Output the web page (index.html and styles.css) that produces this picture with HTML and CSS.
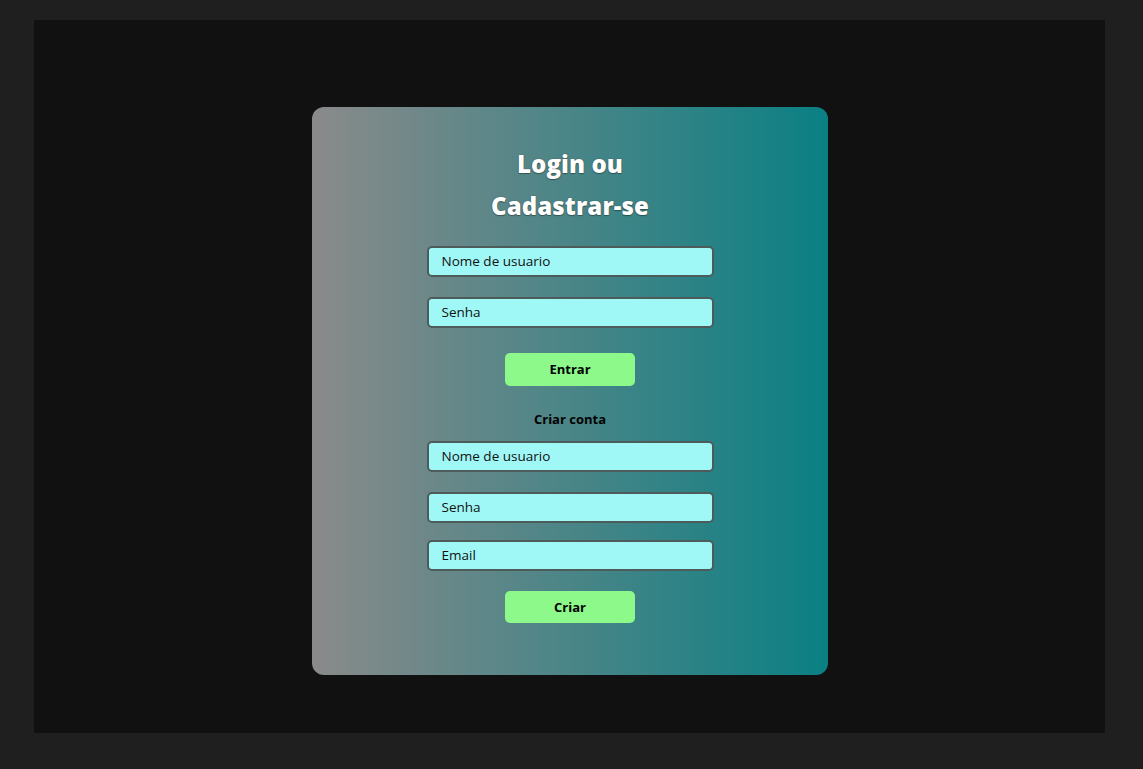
FILE: index.html
```html
<!DOCTYPE html>
<html lang="pt">
<head>
<meta charset="utf-8">
<title>Login ou Cadastrar-se</title>
<link rel="stylesheet" href="styles.css">
</head>
<body>
<div class="panel">
  <div class="card">
    <h1 class="title">Login ou<br>Cadastrar-se</h1>
    <div class="field f-first">Nome de usuario</div>
    <div class="field f-gap20">Senha</div>
    <div class="btn b-login">Entrar</div>
    <div class="subtitle">Criar conta</div>
    <div class="field f-gap13">Nome de usuario</div>
    <div class="field f-gap20">Senha</div>
    <div class="field f-gap17">Email</div>
    <div class="btn b-create">Criar</div>
  </div>
</div>
</body>
</html>
```
FILE: styles.css
```css
html, body {
  margin: 0;
  padding: 0;
}
body {
  background: #1f1f1f;
  width: 1143px;
  height: 769px;
  overflow: hidden;
  font-family: "Open Sans", "Noto Sans", sans-serif;
}
.panel {
  margin: 20px 0 0 34px;
  width: 1071px;
  height: 713px;
  background: #111111;
  padding-top: 87px;
  box-sizing: border-box;
  display: flex;
  justify-content: center;
}
.card {
  width: 516px;
  height: 568px;
  margin-left: 1px;
  border-radius: 12px;
  background: linear-gradient(90deg, #8a8a8a 0%, #0a8084 100%);
  box-sizing: border-box;
  padding-top: 36px;
  display: flex;
  flex-direction: column;
  align-items: center;
}
.title {
  margin: 0;
  font-size: 24px;
  line-height: 42px;
  font-weight: 800;
  color: #ffffff;
  text-align: center;
  letter-spacing: 0.1px;
  text-shadow: 0 0 1px #3a3a3a, 0 1px 1px rgba(0,0,0,0.35);
}
.field {
  width: 287px;
  height: 31px;
  box-sizing: border-box;
  background: #a0f8f6;
  border: 2px solid #4d5b5b;
  border-radius: 5px;
  padding-left: 13px;
  font-size: 13.5px;
  line-height: 27px;
  color: #111;
}
.f-first { margin-top: 19px; }
.f-gap20 { margin-top: 20px; }
.f-gap13 { margin-top: 13px; }
.f-gap17 { margin-top: 17px; }
.btn {
  width: 130px;
  height: 33px;
  background: #8cf98a;
  border-radius: 5px;
  font-size: 13px;
  font-weight: 700;
  line-height: 33px;
  text-align: center;
  color: #000;
  margin-top: 25px;
}
.b-create {
  margin-top: 20px;
  height: 32px;
  line-height: 32px;
}
.subtitle {
  margin-top: 24px;
  font-size: 13px;
  font-weight: 700;
  line-height: 18px;
  color: #000;
  text-align: center;
}
```
